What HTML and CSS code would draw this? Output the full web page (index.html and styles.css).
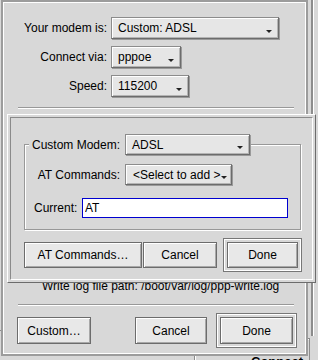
FILE: index.html
```html
<!DOCTYPE html>
<html lang="en">
<head>
    <meta charset="UTF-8">
    <title>Modem Settings</title>
    <link rel="stylesheet" href="styles.css">
</head>
<body>
    <div class="desk">
        <div class="back-right"></div>
        <div class="back-left"></div>
        <div class="back-bottom"><span class="back-label">Connect</span></div>

        <div class="main">
            <div class="form">
                <span class="label">Your modem is:</span>
                <div class="menu menu-modem"><span>Custom: ADSL</span><i class="arrow"></i></div>

                <span class="label">Connect via:</span>
                <div class="menu menu-via"><span>pppoe</span><i class="arrow"></i></div>

                <span class="label">Speed:</span>
                <div class="menu menu-speed"><span>115200</span><i class="arrow"></i></div>
            </div>

            <div class="sep"></div>

            <p class="log-path">Write log file path: /boot/var/log/ppp-write.log</p>

            <div class="sep sep-low"></div>

            <div class="actions">
                <button class="btn btn-custom">Custom…</button>
                <button class="btn btn-cancel">Cancel</button>
                <div class="default-frame"><button class="btn btn-done">Done</button></div>
            </div>
        </div>

        <div class="modal">
            <div class="modal-body">
                <div class="group">
                    <div class="group-title">
                        <span class="title-label">Custom Modem:</span>
                        <div class="menu menu-custom"><span>ADSL</span><i class="arrow"></i></div>
                    </div>

                    <div class="group-row row-at">
                        <span class="at-label">AT Commands:</span>
                        <div class="menu menu-at"><span>&lt;Select to add &gt;</span><i class="arrow arrow-tight"></i></div>
                    </div>

                    <div class="group-row row-current">
                        <span class="current-label">Current:</span>
                        <input class="current-input" type="text" value="AT">
                    </div>
                </div>

                <div class="modal-actions">
                    <button class="btn btn-at">AT Commands…</button>
                    <button class="btn btn-modal-cancel">Cancel</button>
                    <div class="default-frame frame-small"><button class="btn btn-modal-done">Done</button></div>
                </div>
            </div>
        </div>
    </div>
</body>
</html>
```

FILE: styles.css
```css
*{
    box-sizing: border-box;
}
body{
    margin: 0;
    background-color: #d8d8d8;
    font-family: "Liberation Sans", Arial, sans-serif;
    font-size: 12px;
    color: #000;
}
.desk{
    position: relative;
    width: 318px;
    height: 360px;
    overflow: hidden;
}

/* windows lying behind */
.back-right{
    position: absolute;
    left: 311px;
    top: -4px;
    width: 20px;
    height: 340px;
    border-left: 2px solid #8c8c8c;
    box-shadow: inset 1px 0 0 #fff;
}
.back-left{
    position: absolute;
    left: -10px;
    top: 330px;
    width: 20px;
    height: 40px;
    border-top: 1px solid #8c8c8c;
}
.back-bottom{
    position: absolute;
    left: 194px;
    top: 338px;
    width: 116px;
    height: 40px;
    border: 1px solid #8c8c8c;
    box-shadow: inset 1px 1px 0 #fff;
    padding: 15px 0 0 56px;
}
.back-label{
    font-weight: bold;
    font-size: 13px;
}

/* main window */
.main{
    position: relative;
    margin-left: 1px;
    width: 307px;
    height: 356px;
    border: 2px solid #9c9c9c;
    box-shadow: inset 0 0 0 1px #fff;
    background-color: #d8d8d8;
}
.form{
    display: grid;
    grid-template-columns: 104px auto;
    column-gap: 4px;
    row-gap: 7px;
    padding-top: 15px;
    align-items: center;
    justify-items: start;
}
.label{
    justify-self: end;
    white-space: nowrap;
}
.menu{
    display: flex;
    align-items: center;
    height: 22px;
    padding-left: 6px;
    background-color: #e6e6e6;
    border: 1px solid #8c8c8c;
    border-right-color: #6c6c6c;
    border-bottom-color: #6c6c6c;
    box-shadow: inset 1px 1px 0 #fff, inset -1px -1px 0 #b4b4b4, 1px 1px 0 #9a9a9a;
    white-space: nowrap;
}
.menu-modem{
    width: 168px;
}
.menu-via{
    width: 70px;
}
.menu-speed{
    width: 78px;
}
.arrow{
    margin-left: auto;
    margin-right: 6px;
    margin-top: 6px;
    width: 0;
    height: 0;
    border-left: 3px solid transparent;
    border-right: 3px solid transparent;
    border-top: 3px solid #222;
}
.arrow-tight{
    margin-left: 1px;
    margin-right: 0;
}
.sep{
    margin: 10px 12px 0 15px;
    height: 2px;
    border-top: 1px solid #989898;
    border-bottom: 1px solid #fff;
}
.log-path{
    margin: 170px 0 0;
    padding-left: 39px;
    line-height: 14px;
    white-space: nowrap;
}
.sep-low{
    margin-top: 11px;
}
.actions{
    display: flex;
    align-items: center;
    margin-top: 7px;
    padding-left: 14px;
}

/* buttons */
.btn{
    height: 27px;
    padding: 0;
    font-family: "Liberation Sans", Arial, sans-serif;
    font-size: 12px;
    color: #000;
    background-color: #e8e8e8;
    border: 1px solid #6c6c6c;
    box-shadow: inset 1px 1px 0 #fff, inset -1px -1px 0 #a8a8a8;
    white-space: nowrap;
}
.btn-custom{
    width: 74px;
}
.btn-cancel{
    width: 72px;
    margin-left: 44px;
}
.default-frame{
    display: flex;
    margin-left: 9px;
    padding: 3px;
    border: 1px solid #777;
    box-shadow: inset 1px 1px 0 #fff, inset -1px -1px 0 #fff;
}
.btn-done{
    width: 73px;
}

/* custom modem window */
.modal{
    position: absolute;
    left: 7px;
    top: 114px;
    width: 309px;
    height: 169px;
    padding: 2px;
    background-color: #d8d8d8;
    border: 1px solid;
    border-color: #fff #6c6c6c #6c6c6c #fff;
}
.modal-body{
    height: 100%;
    border: 1px solid;
    border-color: #8a8a8a #fff #fff #8a8a8a;
}
.group{
    margin: 26px 0 0 13px;
    width: 277px;
    padding-bottom: 11px;
    border: 1px solid #989898;
    box-shadow: inset 1px 1px 0 #fff, 1px 1px 0 #fff;
}
.group-title{
    display: flex;
    align-items: center;
    width: fit-content;
    margin: -11px 0 0 4px;
    padding: 0 1px;
    background-color: #d8d8d8;
}
.title-label{
    width: 90px;
    margin-right: 5px;
    text-align: right;
}
.menu-custom{
    width: 125px;
    height: 21px;
}
.group-row{
    display: flex;
    align-items: center;
}
.row-at{
    margin-top: 9px;
}
.at-label{
    width: 95px;
    margin-right: 5px;
    text-align: right;
}
.menu-at{
    width: 107px;
    height: 21px;
    padding-left: 7px;
}
.row-current{
    margin-top: 13px;
}
.current-label{
    width: 57px;
    padding-left: 9px;
}
.current-input{
    width: 206px;
    height: 20px;
    padding: 0 2px;
    font-family: "Liberation Sans", Arial, sans-serif;
    font-size: 12px;
    color: #000;
    background-color: #fff;
    border: 1px solid #0000d0;
    outline: none;
}
.modal-actions{
    display: flex;
    align-items: center;
    margin-top: 8px;
    padding-left: 13px;
}
.btn-at{
    width: 118px;
    height: 26px;
}
.btn-modal-cancel{
    width: 74px;
    height: 26px;
    margin-left: 1px;
}
.frame-small{
    margin-left: 6px;
}
.btn-modal-done{
    width: 71px;
    height: 26px;
}
```
